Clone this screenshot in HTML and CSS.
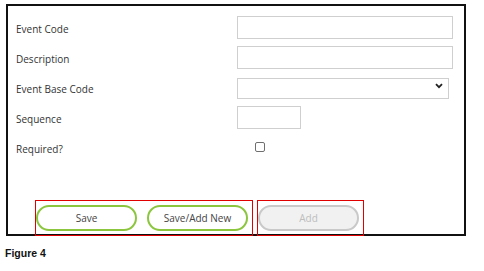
FILE: index.html
```html
<!DOCTYPE html>
<html lang="en">
<head>
    <meta charset="UTF-8">
    <title>Event Code</title>
    <link rel="stylesheet" href="styles.css">
</head>
<body>
    <div class="panel">
        <div class="form">
            <label class="label" for="eventCode">Event Code</label>
            <div class="cell"><input id="eventCode" class="field field-wide" type="text"></div>

            <label class="label" for="description">Description</label>
            <div class="cell"><input id="description" class="field field-wide" type="text"></div>

            <label class="label" for="baseCode">Event Base Code</label>
            <div class="cell">
                <div class="select-wrap">
                    <select id="baseCode" class="field field-select">
                        <option></option>
                    </select>
                    <svg class="chevron" width="8" height="6" viewBox="0 0 8 6">
                        <path d="M1 1.2 L4 4.2 L7 1.2" fill="none" stroke="#222" stroke-width="1.8"/>
                    </svg>
                </div>
            </div>

            <label class="label" for="sequence">Sequence</label>
            <div class="cell"><input id="sequence" class="field field-short" type="text"></div>

            <label class="label" for="required">Required?</label>
            <div class="cell"><input id="required" class="check" type="checkbox"></div>
        </div>

        <div class="actions">
            <div class="mark mark-wide">
                <button class="btn">Save</button>
                <button class="btn">Save/Add New</button>
            </div>
            <div class="mark">
                <button class="btn btn-off" disabled>Add</button>
            </div>
        </div>
    </div>
    <p class="caption">Figure 4</p>
</body>
</html>
```

FILE: styles.css
```css
body {
    margin: 0;
    padding: 0;
    font-family: 'Open Sans', 'Noto Sans', sans-serif;
    color: #333;
    background: #fff;
}
.panel {
    margin: 4px 0 0 6px;
    width: 456px;
    height: 228px;
    border: 2px solid #111;
    display: flex;
    flex-direction: column;
}
.form {
    display: grid;
    grid-template-columns: 221px 1fr;
    grid-auto-rows: 30px;
    padding: 6px 0 0 8px;
}
.label {
    font-size: 10px;
    align-self: center;
    padding-top: 4px;
    color: #333;
}
.cell {
    display: flex;
    align-items: center;
}
.field {
    box-sizing: border-box;
    height: 23px;
    border: 1px solid #cfcfcf;
    background: #fff;
    font-family: inherit;
    font-size: 10px;
    padding: 0 4px;
    margin: 0;
    outline: none;
}
.field-wide {
    width: 216px;
}
.field-short {
    width: 64px;
}
.select-wrap {
    position: relative;
    width: 212px;
}
.field-select {
    width: 212px;
    height: 21px;
    appearance: none;
    -webkit-appearance: none;
    border-radius: 0;
}
.chevron {
    position: absolute;
    right: 6px;
    top: 8px;
}
.check {
    appearance: none;
    -webkit-appearance: none;
    width: 10px;
    height: 10px;
    margin: 0 0 0 18px;
    border: 1px solid #6f6f6f;
    border-radius: 2px;
    background: #fff;
}
.actions {
    margin-top: auto;
    display: flex;
    gap: 4px;
    padding-left: 27px;
}
.mark {
    border: 1px solid #e00000;
    padding: 4px 4px 4px 0;
    display: flex;
    gap: 10px;
    margin-bottom: -2px;
}
.btn {
    box-sizing: border-box;
    width: 101px;
    height: 26px;
    border: 2px solid #8cc63f;
    border-radius: 13px;
    background: #fff;
    font-family: 'Open Sans', 'Noto Sans', sans-serif;
    font-size: 10px;
    color: #444;
    padding: 0;
    cursor: pointer;
}
.btn-off {
    border-color: #c9c9c9;
    background: #f1f1f1;
    color: #bdbdbd;
    cursor: default;
}
.caption {
    margin: 11px 0 0 5px;
    font-family: 'Liberation Sans', Arial, sans-serif;
    font-weight: bold;
    font-size: 10.5px;
    color: #111;
}
```
